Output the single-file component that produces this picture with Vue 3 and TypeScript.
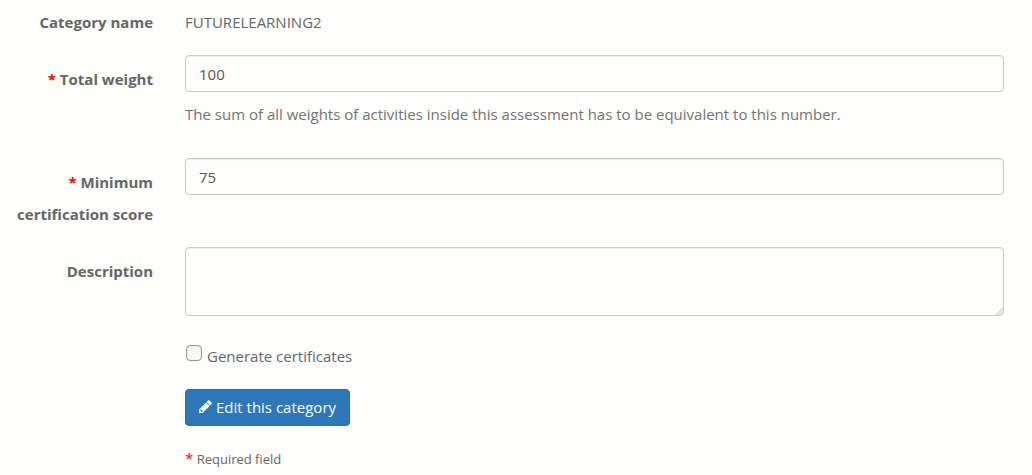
<script setup lang="ts">
import { ref } from 'vue'

const totalWeight = ref('100')
const minimumScore = ref('75')
const description = ref('')
const generate = ref(false)
</script>

<template>
  <form class="form" @submit.prevent>
    <div class="row first">
      <span class="label">Category name</span>
      <div class="field">FUTURELEARNING2</div>
    </div>
    <div class="row weight">
      <label class="label" for="weight"><span class="star">*</span> Total weight</label>
      <div class="field">
        <input id="weight" v-model="totalWeight" class="control" type="text" />
        <p class="help">The sum of all weights of activities inside this assessment has to be equivalent to this number.</p>
      </div>
    </div>
    <div class="row score">
      <label class="label" for="score"><span class="star">*</span> <span>Minimum</span> <span>certification score</span></label>
      <div class="field">
        <input id="score" v-model="minimumScore" class="control" type="text" />
      </div>
    </div>
    <div class="row description">
      <label class="label" for="description">Description</label>
      <div class="field">
        <textarea id="description" v-model="description" class="control area"></textarea>
      </div>
    </div>
    <div class="row">
      <div class="field offset">
        <label class="check"><input v-model="generate" type="checkbox" /><span>Generate certificates</span></label>
        <button class="submit" type="submit">
          <svg class="pencil" viewBox="0 0 1536 1536" aria-hidden="true">
            <path d="M363 1408l91-91-235-235-91 91v107h128v128h107zM886 480q0-22-22-22-10 0-17 7l-542 542q-7 7-7 17 0 22 22 22 10 0 17-7l542-542q7-7 7-17zM832 288l416 416-832 832H0v-416zM1515 384q0 53-37 90l-166 166-416-416 166-165q36-38 90-38 53 0 91 38l235 234q37 39 37 91z" />
          </svg>
          Edit this category
        </button>
        <p class="required"><span class="star">*</span> Required field</p>
      </div>
    </div>
  </form>
</template>

<style>
body {
  background: #fefefd;
}
</style>

<style scoped>
.form {
  padding: 6px 28px 0 0;
  font-family: "Open Sans", sans-serif;
  font-size: 15px;
  line-height: 32px;
  color: #666;
}
.row {
  display: grid;
  grid-template-columns: 153px minmax(0, 1fr);
  column-gap: 32px;
}
.first {
  margin-bottom: 17px;
}
.weight {
  margin-bottom: 32px;
}
.score {
  margin-bottom: 17px;
}
.description {
  margin-bottom: 25px;
}
.label {
  padding-left: 12px;
  text-align: right;
  font-weight: 700;
}
.weight .label,
.score .label,
.description .label {
  padding-top: 8px;
}
.star {
  color: #f00;
}
.control {
  display: block;
  box-sizing: border-box;
  width: 100%;
  height: 37px;
  margin: 0;
  padding: 6px 13px;
  border: 1px solid #c8cac8;
  border-radius: 4px;
  background: #fefefd;
  box-shadow: inset 0 1px 1px rgba(0, 0, 0, 0.075);
  font: inherit;
  line-height: 23px;
  color: #555;
}
.area {
  height: 69px;
  resize: vertical;
}
.area::-webkit-resizer {
  background: linear-gradient(135deg, transparent 70%, #e4e6e4 70%);
}
.help {
  margin: 10px 0 0;
  line-height: 24px;
  color: #737373;
}
.offset {
  grid-column: 2;
}
.check {
  display: flex;
  align-items: center;
  width: fit-content;
  line-height: 30px;
}
.check input {
  appearance: none;
  box-sizing: border-box;
  width: 16px;
  height: 16px;
  margin: 0 5px 6px 1px;
  border: 1px solid #999;
  border-radius: 4px;
  background: linear-gradient(#f2f3f2, #fbfcfb);
  box-shadow: inset 0 0 1px #aaa;
}
.check input:checked {
  background: #2e78b7;
}
.submit {
  display: flex;
  align-items: center;
  gap: 4px;
  height: 37px;
  margin: 18px 0 0;
  padding: 0 13px 2px;
  border: 1px solid #2a6ca5;
  border-radius: 4px;
  background: #2e78b9;
  font: inherit;
  line-height: 24px;
  color: #fff;
}
.pencil {
  width: 13px;
  height: 13px;
  fill: currentColor;
}
.required {
  margin: 16px 0 0;
  font-size: 13px;
}
.required .star {
  font-size: 15px;
}
</style>
